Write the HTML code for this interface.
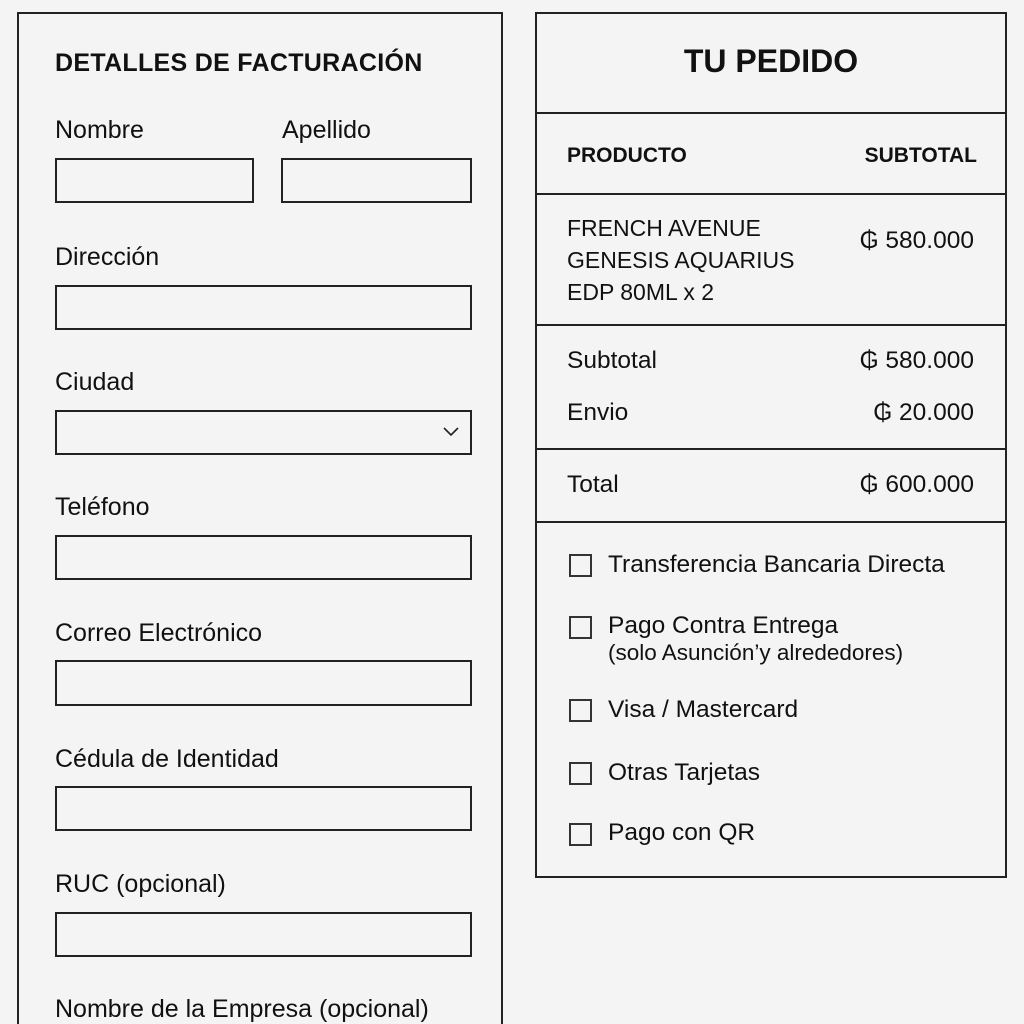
<!DOCTYPE html>
<html><head><meta charset="utf-8"><style>
html,body{margin:0;width:1024px;height:1024px;overflow:hidden}
body{background:#f4f4f4;position:relative;font-family:"Liberation Sans",sans-serif;color:#111}
.t{position:absolute;line-height:1;white-space:nowrap}
.b{position:absolute;border:2px solid #222;box-sizing:border-box}
.l{font-size:25px}
.p{font-size:23px}
.h{position:absolute;left:535px;width:472px;height:0;border-top:2px solid #222}
.cb{position:absolute;left:569px;width:23px;height:23px;border:2px solid #333;box-sizing:border-box}
.pt{font-size:24.5px}
</style></head><body>
<div class="b" style="left:17px;top:12px;width:486px;height:1012px;border-bottom:none"></div>
<div class="t" style="left:55px;top:51px;font-size:25px;font-weight:bold;letter-spacing:0.3px">DETALLES DE FACTURACIÓN</div>
<div class="t l" style="left:55px;top:118px">Nombre</div>
<div class="t l" style="left:282px;top:118px">Apellido</div>
<div class="b" style="left:55px;top:158px;width:199px;height:45px"></div>
<div class="b" style="left:281px;top:158px;width:191px;height:45px"></div>
<div class="t l" style="left:55px;top:245px">Dirección</div>
<div class="b" style="left:55px;top:285px;width:417px;height:45px"></div>
<div class="t l" style="left:55px;top:370px">Ciudad</div>
<div class="b" style="left:55px;top:410px;width:417px;height:45px"></div>
<svg style="position:absolute;left:443px;top:427px" width="16" height="10"><path d="M1 1 L8 8 L15 1" fill="none" stroke="#222" stroke-width="1.6"/></svg>
<div class="t l" style="left:55px;top:495px">Teléfono</div>
<div class="b" style="left:55px;top:535px;width:417px;height:45px"></div>
<div class="t l" style="left:55px;top:621px">Correo Electrónico</div>
<div class="b" style="left:55px;top:660px;width:417px;height:46px"></div>
<div class="t l" style="left:55px;top:747px">Cédula de Identidad</div>
<div class="b" style="left:55px;top:786px;width:417px;height:45px"></div>
<div class="t l" style="left:55px;top:872px">RUC (opcional)</div>
<div class="b" style="left:55px;top:912px;width:417px;height:45px"></div>
<div class="t l" style="left:55px;top:997px">Nombre de la Empresa (opcional)</div>

<div class="b" style="left:535px;top:12px;width:472px;height:866px"></div>
<div class="h" style="top:112px"></div>
<div class="h" style="top:193px"></div>
<div class="h" style="top:324px"></div>
<div class="h" style="top:448px"></div>
<div class="h" style="top:521px"></div>
<div class="t" style="left:535px;width:472px;text-align:center;top:45px;font-size:32px;font-weight:bold">TU PEDIDO</div>
<div class="t" style="left:567px;top:145px;font-size:21px;font-weight:bold">PRODUCTO</div>
<div class="t" style="right:47px;top:145px;font-size:21px;font-weight:bold">SUBTOTAL</div>
<div class="t p" style="left:567px;top:217px">FRENCH AVENUE</div>
<div class="t p" style="left:567px;top:249px">GENESIS AQUARIUS</div>
<div class="t p" style="left:567px;top:281px">EDP 80ML x 2</div>
<div class="t pt" style="right:50px;top:229px">₲ 580.000</div>
<div class="t pt" style="left:567px;top:349px">Subtotal</div>
<div class="t pt" style="right:50px;top:349px">₲ 580.000</div>
<div class="t pt" style="left:567px;top:401px">Envio</div>
<div class="t pt" style="right:50px;top:401px">₲ 20.000</div>
<div class="t pt" style="left:567px;top:473px">Total</div>
<div class="t pt" style="right:50px;top:473px">₲ 600.000</div>
<div class="cb" style="top:554px"></div><div class="t pt" style="left:608px;top:553px">Transferencia Bancaria Directa</div>
<div class="cb" style="top:616px"></div><div class="t pt" style="left:608px;top:614px">Pago Contra Entrega</div>
<div class="t" style="left:608px;top:642px;font-size:22.5px">(solo Asunción’y alrededores)</div>
<div class="cb" style="top:699px"></div><div class="t pt" style="left:608px;top:698px">Visa / Mastercard</div>
<div class="cb" style="top:762px"></div><div class="t pt" style="left:608px;top:761px">Otras Tarjetas</div>
<div class="cb" style="top:823px"></div><div class="t pt" style="left:608px;top:821px">Pago con QR</div>
</body></html>
